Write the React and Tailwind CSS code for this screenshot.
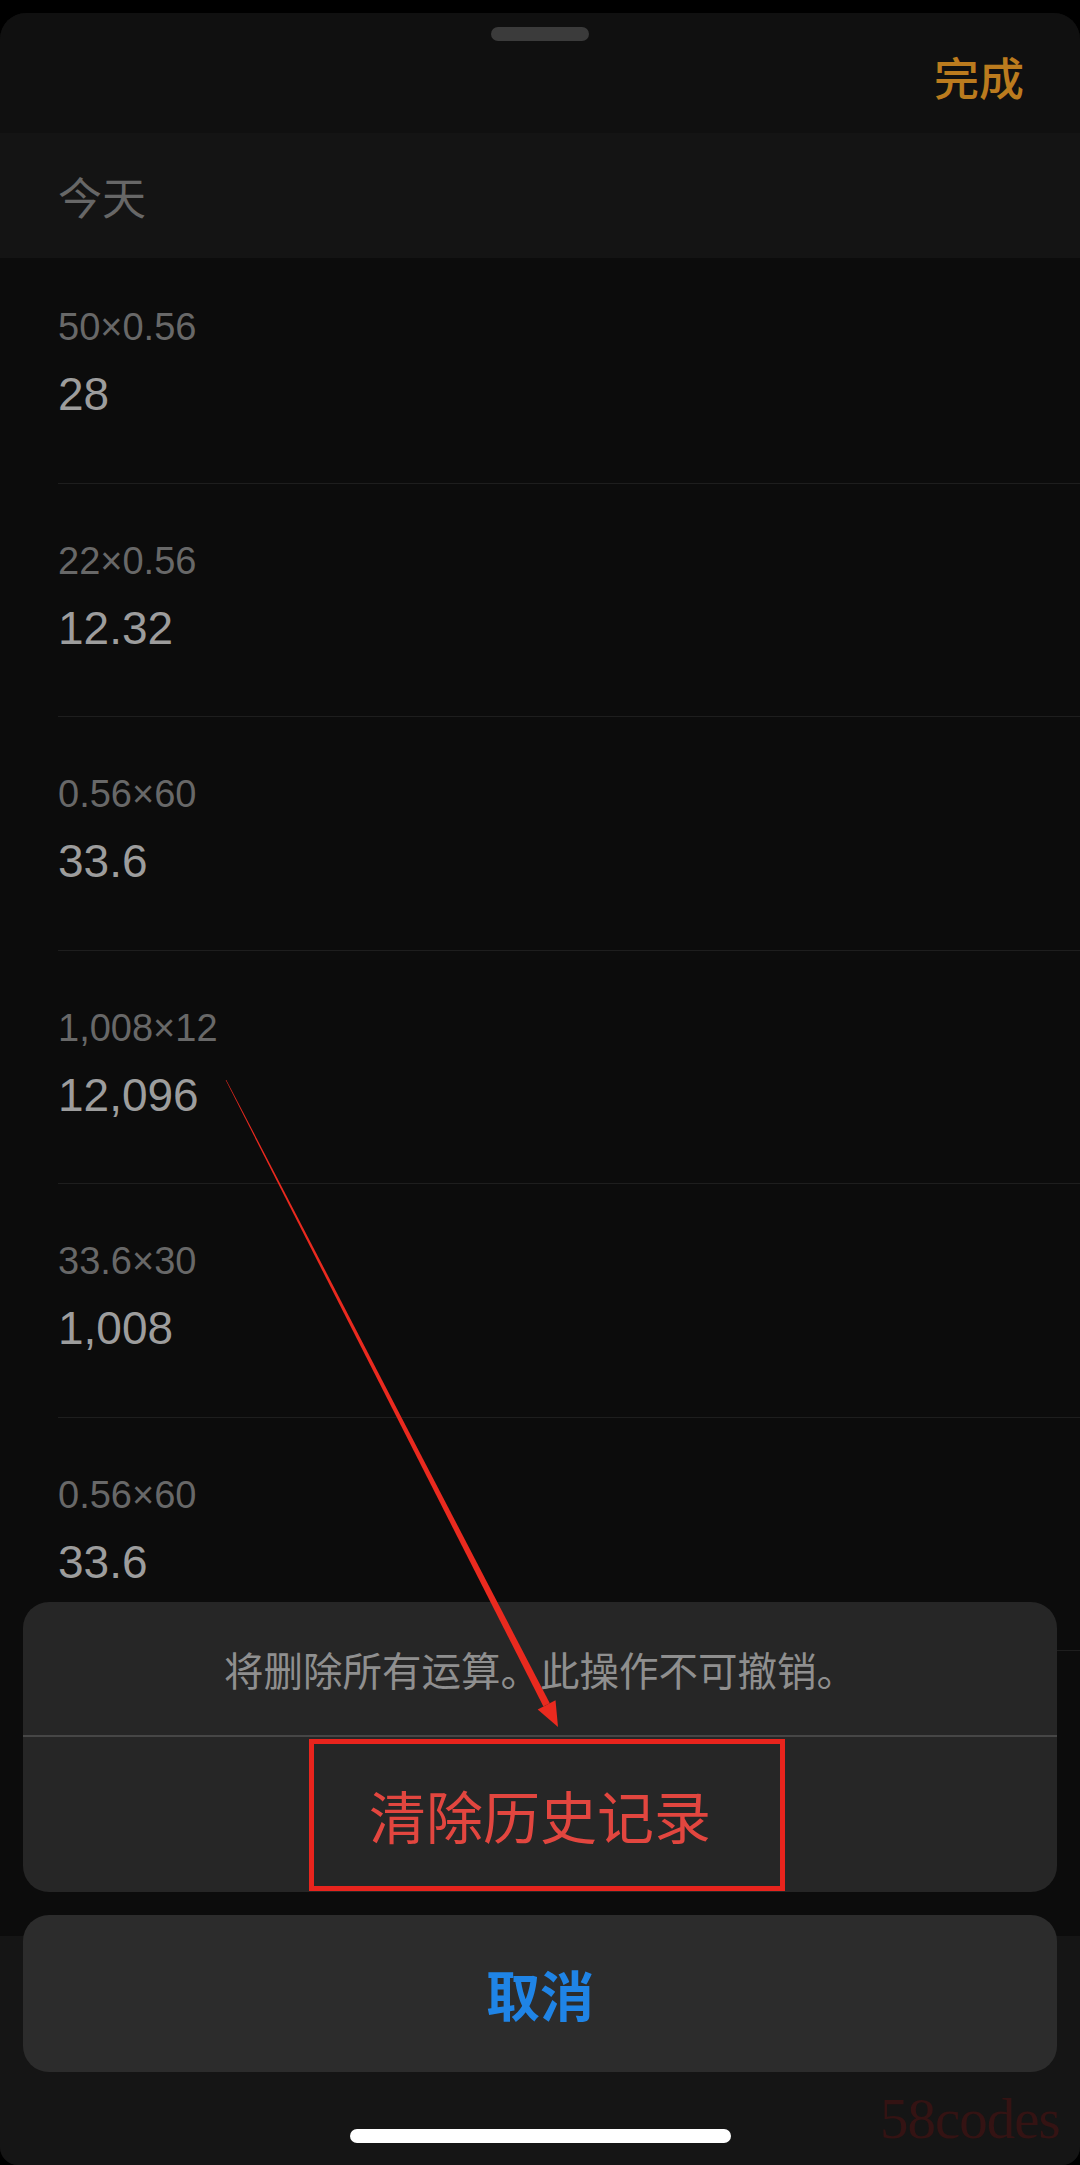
import React from 'react';

const rows = [
  { expr: '50×0.56', result: '28' },
  { expr: '22×0.56', result: '12.32' },
  { expr: '0.56×60', result: '33.6' },
  { expr: '1,008×12', result: '12,096' },
  { expr: '33.6×30', result: '1,008' },
  { expr: '0.56×60', result: '33.6' },
  { expr: '50×0.56', result: '28' },
];

const num = { fontFamily: '"Liberation Sans", Arial, sans-serif' };
const cjk = { fontFamily: '"Noto Sans CJK SC", "Noto Sans", sans-serif' };

function HistoryRow({ expr, result, first }) {
  return (
    <div className={first ? 'pt-[50px]' : 'pt-[58px] border-t border-[#1e1e1e]'}>
      <div className="pr-6 pb-[65.5px]">
        <div className="text-[38px] leading-none text-[#686868]" style={num}>{expr}</div>
        <div className="mt-[25px] text-[46px] leading-none text-[#9d9d9d]" style={num}>{result}</div>
      </div>
    </div>
  );
}

function Arrow() {
  return (
    <svg className="absolute inset-0 pointer-events-none" width="1080" height="2165" viewBox="0 0 1080 2165">
      <polygon points="225.7,1080.1 226.3,1079.9 549.8,1703.2 543.4,1706.4" fill="#ea2a1f" />
      <polygon points="558,1727 537.7,1709.4 555.5,1700.2" fill="#ea2a1f" />
    </svg>
  );
}

export default function App() {
  return (
    <div className="relative w-[1080px] h-[2165px] bg-black overflow-hidden">
      <div className="mt-[13px] h-[2152px] flex flex-col bg-[#0c0c0c] rounded-t-[26px] rounded-b-[18px] overflow-hidden">
        {/* nav */}
        <div className="relative h-[120px] bg-[#101010] flex items-center justify-end pr-[56px]">
          <div className="absolute top-[14px] left-[491px] w-[98px] h-[14px] rounded-full bg-[#3b3b3b]" />
          <span className="mt-[6px] text-[45px] leading-none font-medium text-[#bb7b1e]" style={cjk}>完成</span>
        </div>

        {/* section */}
        <div className="h-[125px] bg-[#141414] flex items-center pl-[58px]">
          <span className="text-[44px] leading-none text-[#676767]" style={cjk}>今天</span>
        </div>

        {/* list */}
        <div className="flex-1 overflow-hidden pl-[58px]">
          {rows.map((r, i) => (
            <HistoryRow key={i} {...r} first={i === 0} />
          ))}
        </div>

        {/* toolbar behind */}
        <div className="h-[229px] bg-[#151515]" />
      </div>

      {/* action sheet */}
      <div className="absolute left-[23px] right-[23px] top-[1602px] flex flex-col">
        <div className="rounded-[26px] bg-[#262626] overflow-hidden">
          <div className="h-[133px] flex items-center justify-center">
            <span className="text-[39.5px] leading-none text-[#8f8f8f]" style={cjk}>将删除所有运算。此操作不可撤销。</span>
          </div>
          <div className="h-[2px] bg-[#464646]" />
          <div className="h-[155px] flex items-center justify-center">
            <span className="text-[57px] leading-none text-[#e2463f]" style={cjk}>清除历史记录</span>
          </div>
        </div>
        <div className="mt-[23px] h-[157px] rounded-[26px] bg-[#2c2c2c] flex items-center justify-center">
          <span className="text-[54px] leading-none font-bold text-[#1f84e6]" style={cjk}>取消</span>
        </div>
      </div>

      {/* annotation */}
      <div className="absolute left-[309px] top-[1739px] w-[476px] h-[152px] border-[5px] border-[#e8241d]" />
      <Arrow />

      {/* home indicator */}
      <div className="absolute left-[350px] top-[2129px] w-[381px] h-[14px] rounded-full bg-white" />

      {/* watermark */}
      <div
        className="absolute left-[880px] top-[2090px] text-[57px] leading-none text-[#341313] tracking-[-1px]"
        style={{ fontFamily: '"Liberation Serif", "Times New Roman", serif' }}
      >
        58codes
      </div>
    </div>
  );
}
